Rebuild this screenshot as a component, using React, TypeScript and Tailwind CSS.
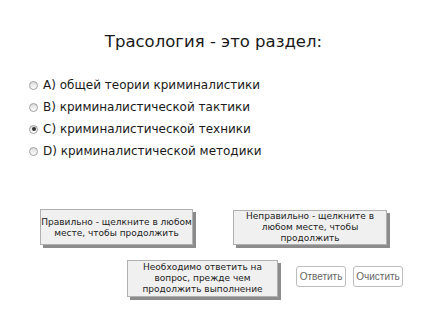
import React from 'react';

const options = [
  { key: 'A', text: 'общей теории криминалистики', checked: false },
  { key: 'B', text: 'криминалистической тактики', checked: false },
  { key: 'C', text: 'криминалистической техники', checked: true },
  { key: 'D', text: 'криминалистической методики', checked: false },
];

const Radio: React.FC<{ checked: boolean }> = ({ checked }) => (
  <span className="w-[9px] h-[9px] rounded-full border border-[#a0a0a0] bg-gradient-to-b from-[#dcdcdc] to-white flex items-center justify-center shrink-0">
    {checked && <span className="w-[4px] h-[4px] rounded-full bg-[#333]" />}
  </span>
);

const Feedback: React.FC<{ className?: string; children: React.ReactNode }> = ({ className = '', children }) => (
  <div
    className={`bg-[#f0f0f0] border border-[#b0b0b0] shadow-[3px_3px_0_#8c8c8c] text-[9px] leading-[11px] text-[#222] text-center whitespace-nowrap flex items-center justify-center ${className}`}
  >
    {children}
  </div>
);

export default function App() {
  return (
    <div className="w-[427px] h-[320px] bg-white font-['DejaVu_Sans',sans-serif] text-[#1a1a1a] flex flex-col">
      <h1 className="pt-[32px] text-center text-[16.5px] leading-[20px] font-normal">
        Трасология - это раздел:
      </h1>

      <div className="mt-[22px] pl-[29px] flex flex-col">
        {options.map((o) => (
          <div key={o.key} className="h-[22px] flex items-center gap-[5px] text-[12px]">
            <Radio checked={o.checked} />
            <span>
              {o.key}) {o.text}
            </span>
          </div>
        ))}
      </div>

      <div className="mt-[47px] flex justify-between px-[40px]">
        <Feedback className="w-[153px] h-[36px] pt-[1px]">
          Правильно - щелкните в любом
          <br />
          месте, чтобы продолжить
        </Feedback>
        <Feedback className="w-[154px] h-[35px] mt-[1px]">
          Неправильно - щелкните в
          <br />
          любом месте, чтобы
          <br />
          продолжить
        </Feedback>
      </div>

      <div className="mt-[15px] flex items-start pl-[127px]">
        <Feedback className="w-[151px] h-[37px]">
          Необходимо ответить на
          <br />
          вопрос, прежде чем
          <br />
          продолжить выполнение
        </Feedback>
        <div className="ml-[18px] mt-[6px] flex gap-[7px]">
          <button className="w-[50px] h-[21px] bg-white border border-[#bdbdbd] rounded-[3px] text-[10px] text-[#666] font-['Liberation_Sans',sans-serif]">
            Ответить
          </button>
          <button className="w-[50px] h-[21px] bg-white border border-[#bdbdbd] rounded-[3px] text-[10px] text-[#666] font-['Liberation_Sans',sans-serif]">
            Очистить
          </button>
        </div>
      </div>
    </div>
  );
}
